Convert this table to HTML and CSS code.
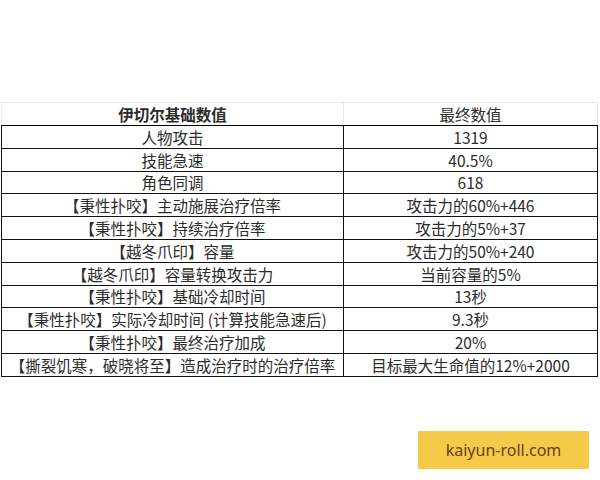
FILE: index.html
```html
<!DOCTYPE html>
<html lang="zh-CN">
<head>
<meta charset="utf-8">
<link rel="stylesheet" href="styles.css">
</head>
<body>
<div class="page">
  <table class="stats">
    <thead>
      <tr>
        <th class="name">伊切尔基础数值</th>
        <th class="val">最终数值</th>
      </tr>
    </thead>
    <tbody>
      <tr><td>人物攻击</td><td>1319</td></tr>
      <tr><td>技能急速</td><td>40.5%</td></tr>
      <tr><td>角色同调</td><td>618</td></tr>
      <tr><td>【秉性扑咬】主动施展治疗倍率</td><td>攻击力的60%+446</td></tr>
      <tr><td>【秉性扑咬】持续治疗倍率</td><td>攻击力的5%+37</td></tr>
      <tr><td>【越冬爪印】容量</td><td>攻击力的50%+240</td></tr>
      <tr><td>【越冬爪印】容量转换攻击力</td><td>当前容量的5%</td></tr>
      <tr><td>【秉性扑咬】基础冷却时间</td><td>13秒</td></tr>
      <tr><td>【秉性扑咬】实际冷却时间 (计算技能急速后)</td><td>9.3秒</td></tr>
      <tr><td>【秉性扑咬】最终治疗加成</td><td>20%</td></tr>
      <tr><td>【撕裂饥寒，破晓将至】造成治疗时的治疗倍率</td><td>目标最大生命值的12%+2000</td></tr>
    </tbody>
  </table>
  <div class="watermark">kaiyun-roll.com</div>
</div>
</body>
</html>
```
FILE: styles.css
```css
html, body {
  margin: 0;
  padding: 0;
  background: #ffffff;
}
.page {
  position: relative;
  width: 600px;
  height: 480px;
  padding-top: 102px;
  padding-left: 1px;
  box-sizing: border-box;
  font-family: "Noto Sans CJK SC", "Noto Sans", sans-serif;
  color: #2b2b2b;
}
.stats {
  border-collapse: collapse;
  width: 597px;
  table-layout: fixed;
  font-size: 15.5px;
}
.stats th, .stats td {
  padding: 0;
  text-align: center;
  white-space: nowrap;
  line-height: 20px;
}
.stats th {
  height: 22px;
  border: 1px solid #e6e6e6;
  border-bottom: 1px solid #000;
  font-weight: normal;
  background: #ffffff;
}
.stats th.name {
  width: 341px;
  font-weight: bold;
}
.stats td {
  height: 21.8px;
  border: 1px solid #111;
}
.watermark {
  position: absolute;
  left: 418px;
  top: 431px;
  width: 171px;
  height: 38px;
  background: #f5ca48;
  color: #6a3f1e;
  font-family: "Noto Sans", sans-serif;
  font-size: 16px;
  line-height: 38px;
  text-align: center;
}
```
